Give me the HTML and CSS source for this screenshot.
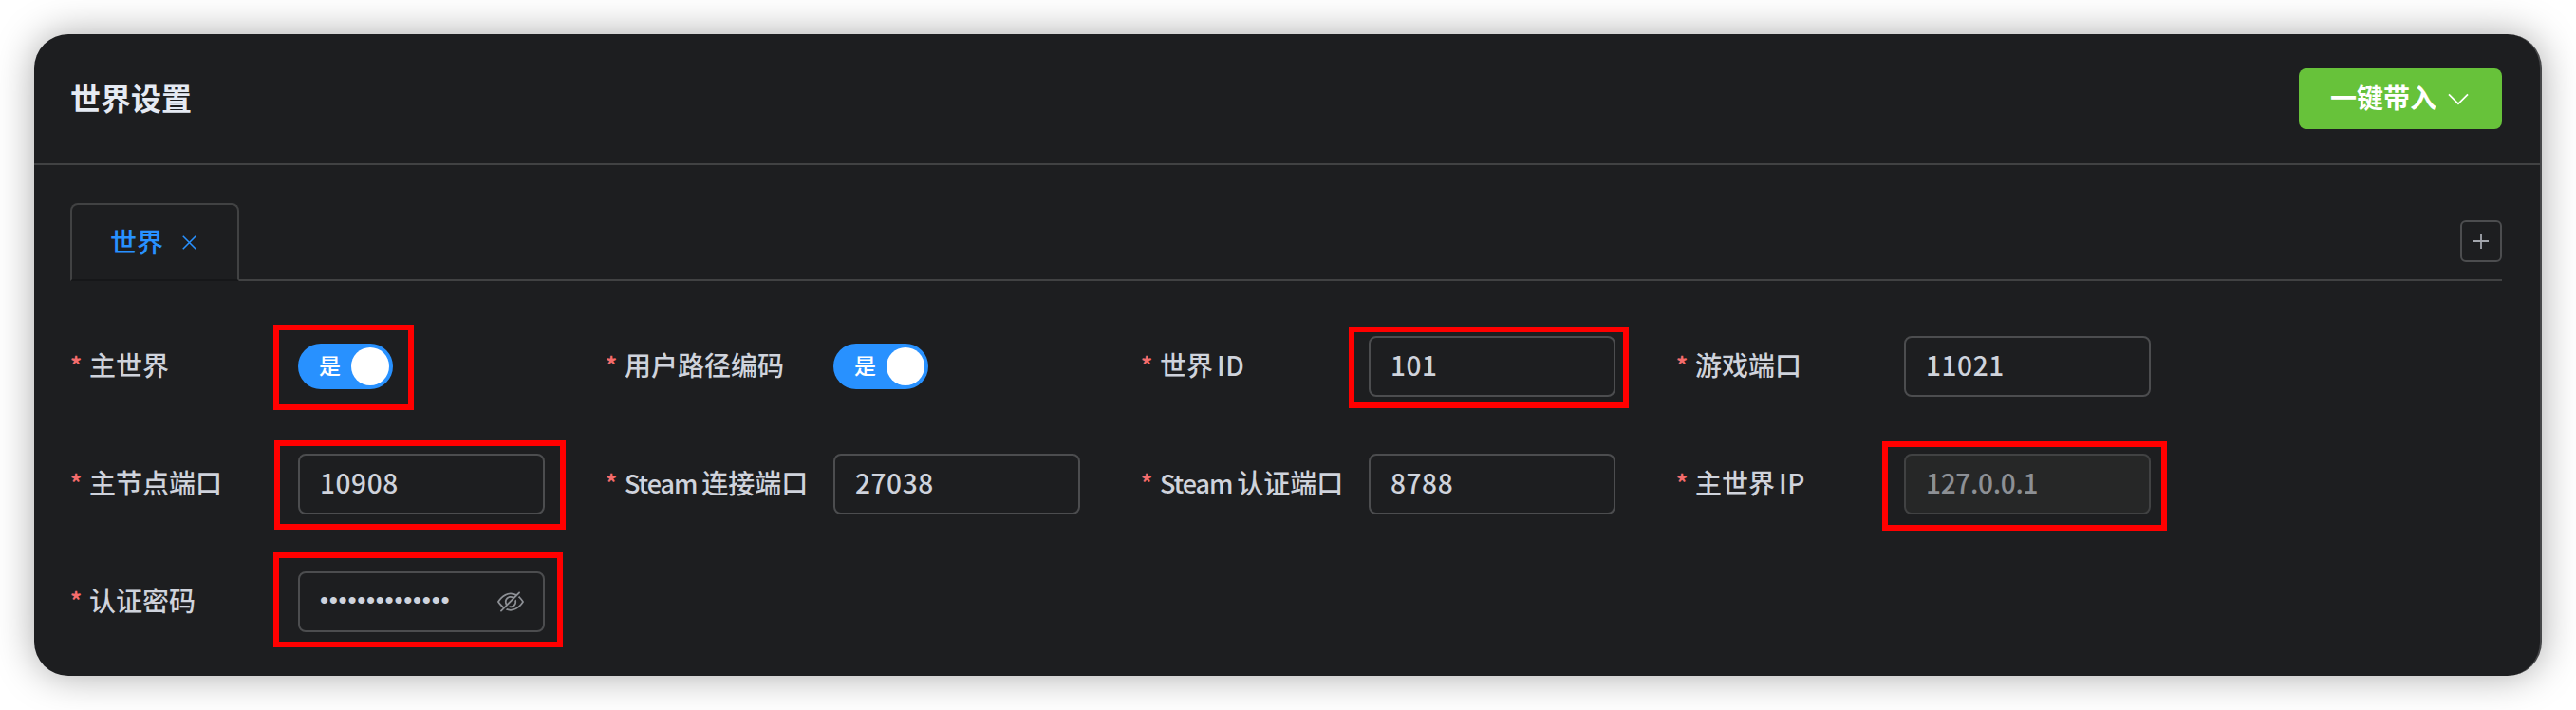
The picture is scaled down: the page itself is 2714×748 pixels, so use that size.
FILE: index.html
```html
<!DOCTYPE html>
<html lang="zh-CN">
<head>
<meta charset="utf-8">
<title>世界设置</title>
<link rel="stylesheet" href="styles.css">
</head>
<body>
<main class="card">
  <header class="card-header">
    <h1 class="title">世界设置</h1>
    <button class="import-btn"><span>一键带入</span>
      <svg class="chevron" viewBox="0 0 22 13"><path d="M1 1.3 11 11.3 21 1.3"/></svg>
    </button>
  </header>
  <section class="card-body">
    <nav class="tabs">
      <div class="tab"><span>世界</span>
        <svg class="close" viewBox="0 0 16 16"><path d="M.8.8 15.2 15.2M15.2.8.8 15.2"/></svg>
      </div>
      <div class="tabs-rest">
        <button class="add" aria-label="add"><svg viewBox="0 0 16 16"><path d="M8 0v16M0 8h16"/></svg></button>
      </div>
    </nav>
    <form class="form">
      <div class="field"><div class="label"><i>*</i><span>主世界</span></div><div class="control mark mark-switch"><div class="switch"><span>是</span><b></b></div></div></div>
      <div class="field"><div class="label"><i>*</i><span>用户路径编码</span></div><div class="control"><div class="switch"><span>是</span><b></b></div></div></div>
      <div class="field"><div class="label"><i>*</i><span>世界<span class="latin-id">ID</span></span></div><div class="control mark mark-id"><div class="input">101</div></div></div>
      <div class="field"><div class="label"><i>*</i><span>游戏端口</span></div><div class="control"><div class="input">11021</div></div></div>
      <div class="field"><div class="label"><i>*</i><span>主节点端口</span></div><div class="control mark mark-port"><div class="input">10908</div></div></div>
      <div class="field"><div class="label"><i>*</i><span><span class="latin">Steam</span>连接端口</span></div><div class="control"><div class="input">27038</div></div></div>
      <div class="field"><div class="label"><i>*</i><span><span class="latin">Steam</span>认证端口</span></div><div class="control"><div class="input">8788</div></div></div>
      <div class="field"><div class="label"><i>*</i><span>主世界<span class="latin-id">IP</span></span></div><div class="control mark mark-ip"><div class="input disabled">127.0.0.1</div></div></div>
      <div class="field"><div class="label"><i>*</i><span>认证密码</span></div><div class="control mark mark-pass"><div class="input password"><span class="dots">••••••••••••••</span>
        <svg class="eye" viewBox="0 0 1024 1024"><path d="M876.8 156.8c0-9.6-3.2-16-9.6-22.4-6.4-6.4-12.8-9.6-22.4-9.6-9.6 0-16 3.2-22.4 9.6L736 220.8c-64-32-137.6-51.2-224-60.8-160 16-288 73.6-377.6 176C44.8 438.4 0 496 0 512s48 73.6 134.4 176c22.4 25.6 44.8 48 73.6 67.2l-86.4 89.6c-6.4 6.4-9.6 12.8-9.6 22.4 0 9.6 3.2 16 9.6 22.4 6.4 6.4 12.8 9.6 22.4 9.6 9.6 0 16-3.2 22.4-9.6l704-710.4c3.2-6.4 6.4-12.8 6.4-22.4Zm-646.4 528c-76.8-70.4-128-128-153.6-172.8 28.8-48 80-105.6 153.6-172.8C304 272 400 230.4 512 224c64 3.2 124.8 19.2 176 44.8l-54.4 54.4C598.4 300.8 560 288 512 288c-64 0-115.2 22.4-160 64s-64 96-64 160c0 48 12.8 89.6 35.2 124.8L256 707.2c-9.6-6.4-19.2-16-25.6-22.4Zm140.8-96c-12.8-22.4-19.2-48-19.2-76.8 0-44.8 16-83.2 48-112 32-28.8 67.2-48 112-48 28.8 0 54.4 6.4 73.6 19.2L371.2 588.8ZM889.6 336c-12.8-16-28.8-28.8-41.6-41.6l-48 48c73.6 67.2 124.8 124.8 150.4 169.6-28.8 48-80 105.6-153.6 172.8-73.6 67.2-172.8 108.8-284.8 115.2-51.2-3.2-99.2-12.8-140.8-28.8l-48 48c57.6 22.4 118.4 38.4 188.8 44.8 160-16 288-73.6 377.6-176C979.2 585.6 1024 528 1024 512s-48-73.6-134.4-176Z"/><path d="M512 672c-12.8 0-25.6-3.2-38.4-6.4l-51.2 51.2c28.8 12.8 57.6 19.2 89.6 19.2 64 0 115.2-22.4 160-64 41.6-41.6 64-96 64-160 0-32-6.4-64-19.2-89.6l-51.2 51.2c3.2 12.8 6.4 25.6 6.4 38.4 0 44.8-16 83.2-48 112-32 28.8-67.2 48-112 48Z"/></svg>
      </div></div></div>
    </form>
  </section>
</main>
</body>
</html>
```
FILE: styles.css
```css
* { box-sizing: border-box; }
body {
  margin: 0;
  height: 748px;
  padding: 36px;
  overflow: hidden;
  background: #fff;
  font: 500 28px/1 "Noto Sans CJK SC", sans-serif;
  color: #cfd3dc;
}
button { font: inherit; margin: 0; padding: 0; cursor: pointer; }
svg { display: block; flex: none; fill: none; }
.card {
  height: 676px;
  border-right: 2px solid #464749;
  border-radius: 36px;
  background: #1d1e20;
  box-shadow: 0 0 40px rgba(0, 0, 0, .34);
}
.card-header {
  display: flex;
  align-items: center;
  justify-content: space-between;
  height: 138px;
  padding: 0 40px 0 38px;
  border-bottom: 2px solid #414243;
}
.title { margin: 0; padding-bottom: 4px; font-size: 32px; font-weight: 700; color: #e5eaf3; }
.import-btn {
  display: flex;
  align-items: center;
  gap: 12px;
  width: 214px;
  height: 64px;
  padding: 0 0 4px 33px;
  border: 0;
  border-radius: 8px;
  background: #67c23a;
  color: #fff;
  font-weight: 700;
}
.chevron { width: 22px; height: 13px; margin-top: 4px; stroke: #fff; stroke-width: 1.8; }
.card-body { padding: 40px 40px 0 38px; }
.tabs { display: flex; height: 82px; }
.tab {
  display: flex;
  align-items: center;
  gap: 20px;
  width: 178px;
  padding-left: 40px;
  border: 2px solid #414243;
  border-bottom-color: #161719;
  border-radius: 8px 8px 0 0;
  color: #2891ff;
}
.tab span { padding-bottom: 2px; }
.close { width: 15px; height: 15px; stroke: #2891ff; stroke-width: 1.6; }
.tabs-rest { flex: 1; display: flex; justify-content: flex-end; padding-top: 18px; border-bottom: 2px solid #414243; }
.add {
  display: grid;
  place-items: center;
  width: 44px;
  height: 44px;
  border: 2px solid #4c4d4f;
  border-radius: 6px;
  background: none;
}
.add svg { width: 16px; height: 16px; stroke: #a3a6ad; stroke-width: 1.8; }
.form {
  display: grid;
  grid-template-columns: repeat(4, 564px);
  grid-auto-rows: 64px;
  row-gap: 60px;
  padding-top: 58px;
}
.field { display: flex; align-items: center; }
.label { display: flex; width: 240px; padding-bottom: 5px; white-space: nowrap; }
.label i { width: 20px; padding-left: 0; font-style: normal; font-weight: 700; font-size: 24px; line-height: 28px; color: #f56c6c; }
.latin { margin-right: 5px; font-size: 27px; letter-spacing: -1.1px; }
.latin-id { margin-left: 4px; letter-spacing: .5px; }
.control { position: relative; display: flex; align-items: center; width: 260px; height: 64px; }
.input {
  display: flex;
  align-items: center;
  width: 260px;
  height: 64px;
  padding: 0 20px 4px 21px;
  border: 2px solid #4c4d4f;
  border-radius: 8px;
  letter-spacing: .6px;
}
.disabled { background: #262727; border-color: #414243; color: #8d9095; letter-spacing: -.3px; }
.password { justify-content: space-between; padding-bottom: 0; }
.dots { padding-bottom: 4px; font-family: "Liberation Sans", sans-serif; font-size: 26px; letter-spacing: .7px; }
.eye { width: 28px; height: 28px; fill: #8d9095; }
.switch {
  display: flex;
  align-items: center;
  justify-content: space-between;
  width: 100px;
  height: 48px;
  padding: 0 4px 0 22px;
  border-radius: 24px;
  background: #2891ff;
  color: #fff;
  font-size: 23px;
}
.switch span { padding-bottom: 4px; }
.switch b { width: 40px; height: 40px; border-radius: 50%; background: #fff; }

/* Highlight frames around the settings that need attention */
.mark::after { content: ""; position: absolute; border: 6px solid #f00; pointer-events: none; }
.mark-switch::after { inset: -12px 138px -14px -26px; }
.mark-id::after { inset: -10px -14px -12px -21px; }
.mark-port::after { inset: -14px -22px -16px -25px; }
.mark-ip::after { inset: -13px -17px -17px -23px; }
.mark-pass::after { inset: -20px -19px -16px -26px; }
```
